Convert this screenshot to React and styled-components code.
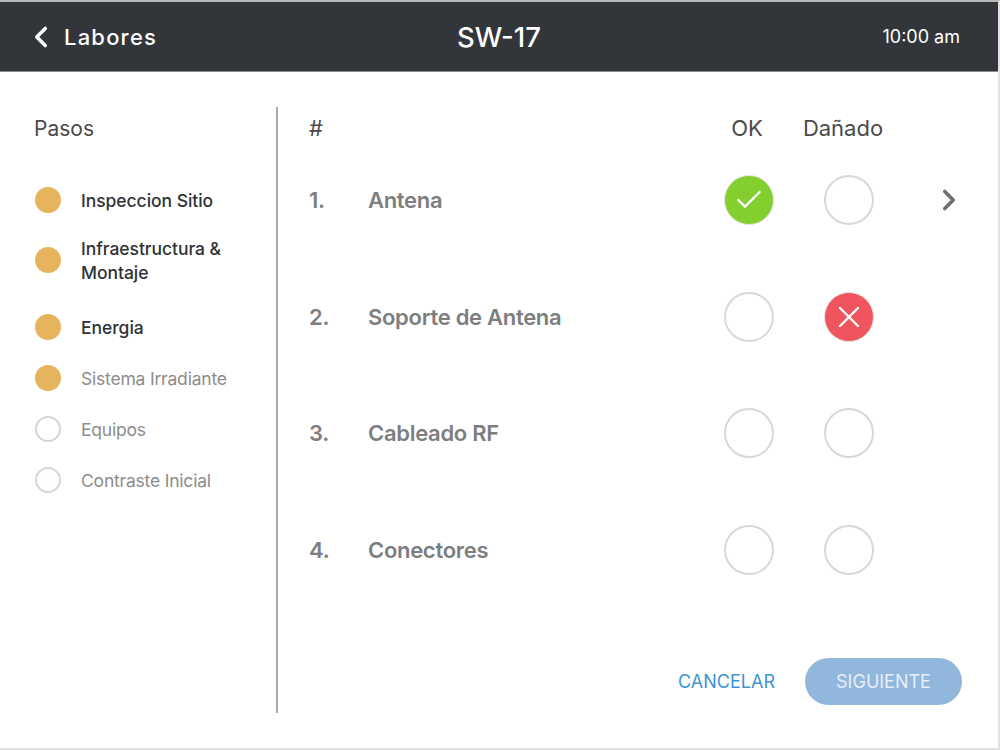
import React from "react";
import styled, { createGlobalStyle } from "styled-components";
import { ChevronLeft, ChevronRight, Check, X } from "lucide-react";

const steps = [
  { label: "Inspeccion Sitio", done: true, active: true, after: 23 },
  { label: "Infraestructura & Montaje", done: true, active: true, after: 30 },
  { label: "Energia", done: true, active: true, after: 25 },
  { label: "Sistema Irradiante", done: true, after: 25 },
  { label: "Equipos", after: 25 },
  { label: "Contraste Inicial", after: 0 },
];

const rows = [
  { id: 1, name: "Antena", ok: true, more: true },
  { id: 2, name: "Soporte de Antena", bad: true },
  { id: 3, name: "Cableado RF" },
  { id: 4, name: "Conectores" },
];

export default function App() {
  return (
    <Screen>
      <GlobalStyle />
      <Header>
        <BackLink>
          <ChevronLeft size={34} strokeWidth={2.5} />
          <span>Labores</span>
        </BackLink>
        <Title>SW-17</Title>
        <Clock>10:00 am</Clock>
      </Header>
      <Body>
        <Sidebar>
          <SideTitle>Pasos</SideTitle>
          <StepList>
            {steps.map((step) => (
              <Step key={step.label} $after={step.after}>
                <Dot $done={step.done} />
                <StepLabel $active={step.active}>{step.label}</StepLabel>
              </Step>
            ))}
          </StepList>
        </Sidebar>
        <Main>
          <ColumnHead>
            <HeadNumber>#</HeadNumber>
            <HeadOk>OK</HeadOk>
            <HeadBad>Dañado</HeadBad>
          </ColumnHead>
          <RowList>
            {rows.map((row) => (
              <Row key={row.id}>
                <RowNumber>{row.id}.</RowNumber>
                <RowName>{row.name}</RowName>
                <Choice $kind={row.ok ? "ok" : null}>
                  {row.ok && <Check size={32} strokeWidth={1.8} color="#fff" />}
                </Choice>
                <Choice $kind={row.bad ? "bad" : null}>
                  {row.bad && <X size={36} strokeWidth={1.6} color="#fff" />}
                </Choice>
                <More>
                  {row.more && <ChevronRight size={34} strokeWidth={2.5} color="#6b6d70" />}
                </More>
              </Row>
            ))}
          </RowList>
          <Actions>
            <CancelButton>CANCELAR</CancelButton>
            <NextButton>SIGUIENTE</NextButton>
          </Actions>
        </Main>
      </Body>
    </Screen>
  );
}

const GlobalStyle = createGlobalStyle`
  html, body {
    margin: 0;
    padding: 0;
    background: #fff;
  }
  body {
    font-family: Inter, "Liberation Sans", sans-serif;
  }
`;

const Screen = styled.div`
  box-sizing: border-box;
  width: 1000px;
  height: 750px;
  display: flex;
  flex-direction: column;
  border-top: 2px solid #b9b9b9;
  border-right: 2px solid #e2e2e2;
  border-bottom: 2px solid #e2e2e2;
  background: #fff;
  overflow: hidden;
`;

const Header = styled.header`
  box-sizing: border-box;
  height: 70px;
  flex: none;
  display: grid;
  grid-template-columns: 1fr auto 1fr;
  align-items: center;
  padding: 0 38px;
  background: #32353a;
  border-bottom: 1px solid #8b8c8e;
  color: #fff;
`;

const BackLink = styled.div`
  display: flex;
  align-items: center;
  gap: 6px;
  margin-left: -14px;
  font-size: 22px;
  font-weight: 500;
  letter-spacing: 1.2px;
`;

const Title = styled.div`
  font-size: 27.5px;
  font-weight: 500;
`;

const Clock = styled.div`
  justify-self: end;
  font-size: 18px;
  font-weight: 400;
`;

const Body = styled.div`
  flex: 1;
  display: flex;
  padding-top: 35px;
  padding-bottom: 35px;
`;

const Sidebar = styled.aside`
  box-sizing: border-box;
  width: 278px;
  flex: none;
  padding-left: 34px;
  border-right: 2px solid #a9a9a9;
`;

const SideTitle = styled.h2`
  margin: 0 0 38px;
  height: 42px;
  line-height: 44px;
  font-size: 21px;
  font-weight: 400;
  color: #4a4a4a;
`;

const StepList = styled.ul`
  list-style: none;
  margin: 0;
  padding: 0;
`;

const Step = styled.li`
  display: flex;
  align-items: center;
  gap: 20px;
  min-height: 26px;
  margin-bottom: ${(p) => p.$after}px;
`;

const Dot = styled.span`
  box-sizing: border-box;
  width: 26px;
  height: 26px;
  margin-left: 1px;
  flex: none;
  border-radius: 50%;
  background: ${(p) => (p.$done ? "#e6b45c" : "#fff")};
  border: ${(p) => (p.$done ? "none" : "2px solid #d5d5d5")};
`;

const StepLabel = styled.span`
  width: 150px;
  padding-top: 1px;
  margin-bottom: -1px;
  font-size: 17.5px;
  font-weight: ${(p) => (p.$active ? 500 : 400)};
  line-height: 24px;
  letter-spacing: ${(p) => (p.$active ? "-0.05px" : "-0.2px")};
  color: ${(p) => (p.$active ? "#2f3236" : "#8c8c8c")};
`;

const Main = styled.main`
  flex: 1;
  min-width: 0;
  display: flex;
  flex-direction: column;
  padding-left: 31px;
  padding-right: 36px;
`;

const ColumnHead = styled.div`
  display: flex;
  align-items: center;
  height: 42px;
  font-size: 22px;
  color: #4a4a4a;
`;

const HeadNumber = styled.span`
  width: 406px;
`;

const HeadOk = styled.span`
  width: 64px;
  text-align: center;
`;

const HeadBad = styled.span`
  width: 128px;
  text-align: center;
`;

const RowList = styled.div`
  display: flex;
  flex-direction: column;
  gap: 66.67px;
  margin-top: 26px;
`;

const Row = styled.div`
  display: flex;
  align-items: center;
  height: 50px;
  color: #7d7e80;
  font-size: 22px;
  font-weight: 600;
  letter-spacing: -0.3px;
`;

const RowNumber = styled.span`
  width: 59px;
  flex: none;
`;

const RowName = styled.span`
  width: 356px;
  flex: none;
`;

const Choice = styled.span`
  box-sizing: border-box;
  width: 50px;
  height: 50px;
  margin-right: 50px;
  flex: none;
  display: flex;
  align-items: center;
  justify-content: center;
  border-radius: 50%;
  background: ${(p) => (p.$kind === "ok" ? "#82cf2e" : p.$kind === "bad" ? "#f0545c" : "#fff")};
  border: ${(p) => (p.$kind ? "1px solid #e6e6e6" : "2px solid #d8d8d8")};
`;

const More = styled.span`
  width: 34px;
  height: 34px;
  margin-left: 8px;
  flex: none;
`;

const Actions = styled.div`
  margin-top: auto;
  margin-bottom: 8px;
  display: flex;
  align-items: center;
  justify-content: flex-end;
  gap: 30px;
`;

const CancelButton = styled.button`
  padding: 0;
  border: none;
  background: none;
  font: 400 18px Inter, "Liberation Sans", sans-serif;
  color: #3e94d1;
`;

const NextButton = styled.button`
  width: 157px;
  height: 47px;
  border: none;
  border-radius: 24px;
  background: #92b7dd;
  font: 400 18px Inter, "Liberation Sans", sans-serif;
  color: #e6eef7;
`;
